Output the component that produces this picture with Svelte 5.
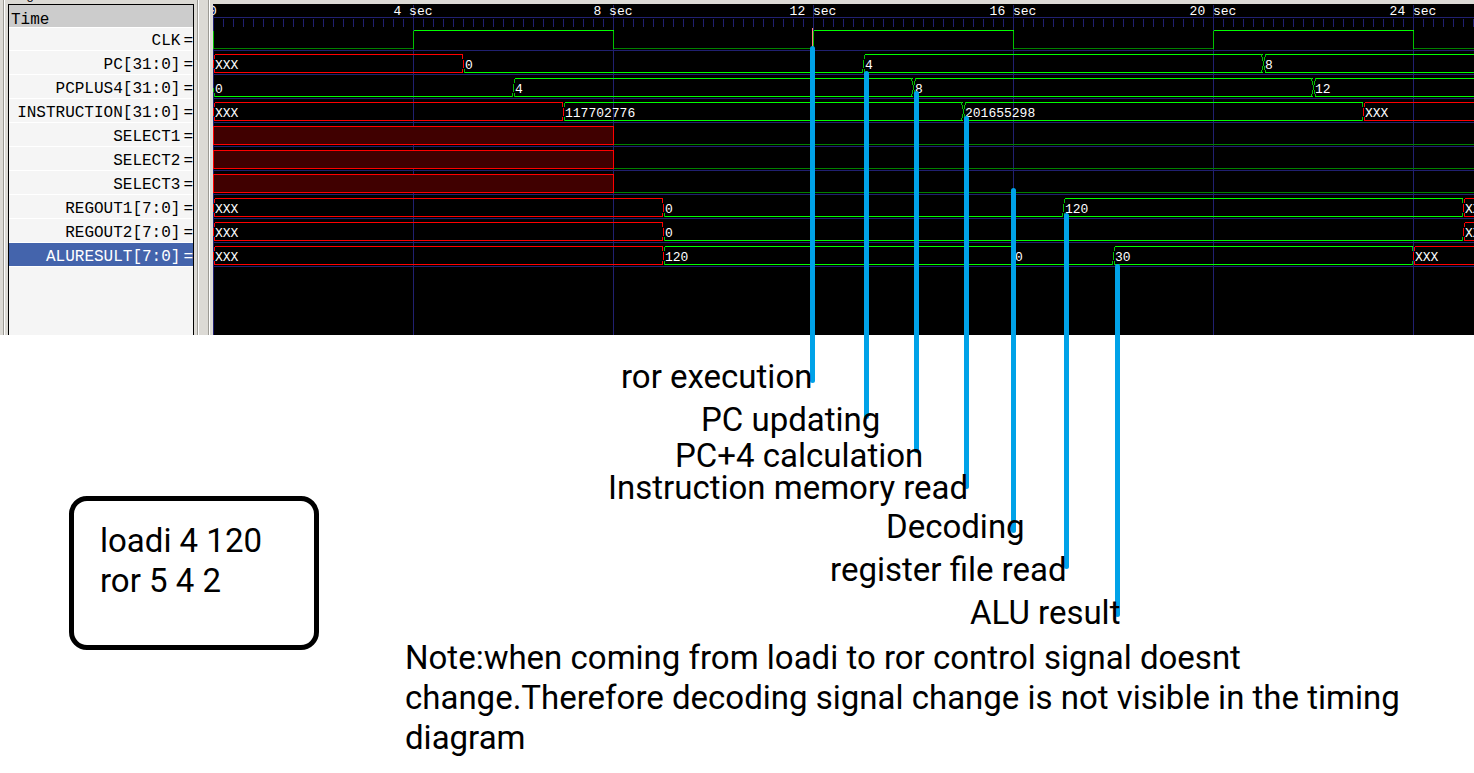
<script>
  const SECOND = 50;
  const ROW = 24;
  const FIRST_ROW = 26;
  const HIGH = 18;
  const END = 60;

  const bus = (name, values) => ({ name, kind: 'bus', values });
  const select = (name) => ({ name, kind: 'bit', values: [[0, 'x'], [8, 0]] });

  const signals = [
    { name: 'CLK', kind: 'bit', values: [[0, 0], [4, 1], [8, 0], [12, 1], [16, 0], [20, 1], [24, 0], [28, 1]] },
    bus('PC[31:0]', [[0, 'XXX'], [5, '0'], [13, '4'], [21, '8']]),
    bus('PCPLUS4[31:0]', [[0, '0'], [6, '4'], [14, '8'], [22, '12']]),
    bus('INSTRUCTION[31:0]', [[0, 'XXX'], [7, '117702776'], [15, '201655298'], [23, 'XXX']]),
    select('SELECT1'),
    select('SELECT2'),
    select('SELECT3'),
    bus('REGOUT1[7:0]', [[0, 'XXX'], [9, '0'], [17, '120'], [25, 'XXX']]),
    bus('REGOUT2[7:0]', [[0, 'XXX'], [9, '0'], [25, 'XXX']]),
    bus('ALURESULT[7:0]', [[0, 'XXX'], [9, '120'], [16, '0'], [18, '30'], [24, 'XXX']])
  ];
  const selected = 'ALURESULT[7:0]';

  const segments = (signal) =>
    signal.values.map(([time, value], i) => ({
      x: time * SECOND,
      end: (signal.values[i + 1]?.[0] ?? END) * SECOND,
      value,
      prev: i ? signal.values[i - 1][1] : null
    }));

  // Zero buses show only their lower rail, so their edges are half height.
  function edge(x, side, value, wide) {
    if (wide) return `M${x + side * 2} 0L${x} 9L${x + side * 2} 18`;
    const o = x + side;
    const lower = `M${x} 9V13M${o} 14V18`;
    return value === '0' ? lower : `M${o} 0V4M${x} 5V13M${o} 14V18`;
  }
  const crosses = (a, b) => [a, b].every((v) => v && v !== '0' && v !== 'XXX');
  const rail = (v) => (v === 'XXX' ? '#ff0000' : '#00ff00');
  const edgeColor = (v) => (v === 'XXX' ? '#ff0000' : '#00c000');

  const majors = [0, 4, 8, 12, 16, 20, 24, 28, 32, 36, 40];
  const ticks = Array.from({ length: 300 }, (_, i) => i * 10);

  const callouts = [
    { text: 'ror execution', x: 812, from: 48, to: 380, left: 621, top: 357 },
    { text: 'PC updating', x: 866, from: 73, to: 416, left: 701, top: 400 },
    { text: 'PC+4 calculation', x: 916, from: 93, to: 450, left: 675, top: 436 },
    { text: 'Instruction memory read', x: 966, from: 118, to: 486, left: 608, top: 468 },
    { text: 'Decoding', x: 1013, from: 190, to: 530, left: 886, top: 507 },
    { text: 'register file read', x: 1066, from: 215, to: 566, left: 830, top: 550 },
    { text: 'ALU result', x: 1117, from: 266, to: 614, left: 970, top: 593 }
  ];
</script>

<main>
  <section class="viewer">
    <div class="names">
      <div class="caption">Signals</div>
      <div class="list">
        <div class="time">Time</div>
        <ul>
          {#each signals as s}
            <li class:selected={s.name === selected}><span>{s.name}</span><span>=</span></li>
          {/each}
        </ul>
      </div>
    </div>
    <div class="divider"></div>
    <svg class="wave" aria-label="Waveforms">
      <g transform="translate(0.5 0.5)" fill="none" shape-rendering="crispEdges">
        <g stroke="#202070">
          {#each majors as t}
            <path d="M{t * SECOND} 0V340" />
          {/each}
          <path d="M0 13H3000" />
          {#each ticks as x}
            <path d="M{x} 14V22" />
          {/each}
          {#each signals as _, i}
            <path d="M0 {FIRST_ROW + i * ROW + 20}H3000" />
          {/each}
        </g>
        {#each signals as s, i}
          <g transform="translate(0 {FIRST_ROW + i * ROW})">
            {#each segments(s) as g}
              {#if s.kind === 'bit'}
                {#if g.value === 'x'}
                  <rect x={g.x} y="0" width={g.end - g.x} height={HIGH} fill="#400000" stroke="#ff0000" />
                {:else}
                  <path d="M{g.x} {g.value ? 0 : HIGH}H{g.end}" stroke={g.value ? '#00ff00' : '#008000'} />
                  {#if g.prev !== 'x'}
                    <path d="M{g.x} 0V{HIGH}" stroke="#00c000" />
                  {/if}
                {/if}
              {:else}
                {@const wide = crosses(g.prev, g.value)}
                {#if g.value !== '0'}
                  <path d="M{g.x + 1} 0H{g.end - 1}" stroke={rail(g.value)} />
                {/if}
                <path d="M{g.x + 1} {HIGH}H{g.end - 1}" stroke={rail(g.value)} />
                {#if g.prev}
                  <path d={edge(g.x, -1, g.prev, wide)} stroke={edgeColor(g.prev)} />
                {/if}
                <path d={edge(g.x, 1, g.value, wide)} stroke={edgeColor(g.value)} />
                {#if g.prev === 'XXX'}
                  <path d="M{g.x} 5V13" stroke="#ff0000" />
                {/if}
              {/if}
            {/each}
          </g>
        {/each}
        <path d="M599 23V60" stroke="#ff8080" />
      </g>
      {#each majors as t}
        <text x={t * SECOND} y="11" text-anchor="middle">{t ? `${t} sec` : '0'}</text>
      {/each}
      {#each signals as s, i}
        {#if s.kind === 'bus'}
          {#each segments(s) as g}
            <text x={g.x + 2} y={FIRST_ROW + i * ROW + 15}>{g.value}</text>
          {/each}
        {/if}
      {/each}
    </svg>
  </section>

  <section class="notes">
    <div class="program">loadi 4 120<br />ror 5 4 2</div>
    <p>
      Note:when coming from loadi to ror control signal doesnt change.Therefore decoding signal
      change is not visible in the timing diagram
    </p>
  </section>

  <svg class="pointers" aria-hidden="true">
    {#each callouts as c}
      <path d="M{c.x} {c.from}V{c.to}" transform="translate(0.5 0.5)" />
    {/each}
  </svg>
  {#each callouts as c}
    <span class="callout" style="left: {c.left}px; top: {c.top}px">{c.text}</span>
  {/each}
</main>

<style>
  :global(body) {
    margin: 0;
    background: #fff;
  }
  main {
    position: relative;
    overflow: hidden;
    color: #000;
    font: 33px/40px Roboto, sans-serif;
  }
  .viewer {
    display: flex;
    height: 335px;
    overflow: hidden;
    background: #dcdad5;
    font: 16px/22px 'Liberation Mono', monospace;
  }
  .names {
    box-sizing: border-box;
    flex: none;
    display: flex;
    flex-direction: column;
    margin-left: 3px;
    padding: 0 3px;
    border-left: 1px solid #9c9a94;
    border-right: 1px solid #9c9a94;
    box-shadow: inset 1px 0 #fff, 1px 0 #fff;
    width: 195px;
  }
  .caption {
    display: flex;
    align-items: flex-end;
    height: 4px;
    padding-left: 8px;
    overflow: hidden;
    font: 13px/18px 'Liberation Sans', sans-serif;
  }
  .list {
    flex: 1;
    margin-left: 1px;
    border: solid #000;
    border-width: 1px 1px 0;
    background: #f5f5f5;
  }
  .time {
    height: 22px;
    padding-left: 2px;
    background: #ccc;
    line-height: 30px;
  }
  ul {
    margin: 0;
    padding: 0;
    list-style: none;
  }
  li {
    box-sizing: border-box;
    display: flex;
    justify-content: flex-end;
    gap: 3px;
    height: 24px;
    border-bottom: 1px solid #fff;
    line-height: 28px;
  }
  li:first-child {
    border-top: 1px solid #fff;
    line-height: 26px;
  }
  li.selected {
    background: #4464ac;
    color: #fff;
  }
  .divider {
    flex: none;
    box-sizing: border-box;
    width: 5px;
    margin: 0 0 0 10px;
    border-left: 1px solid #9c9a94;
    box-shadow: inset 1px 0 #fff;
  }
  .wave {
    flex: 1;
    min-width: 0;
    height: 331px;
    margin-top: 4px;
    background: #000;
    font-size: 13px;
  }
  .wave text {
    fill: #fff;
  }
  .notes {
    display: grid;
    grid-template-columns: 250px 1fr;
    column-gap: 86px;
    align-items: start;
    padding: 161px 20px 15px 69px;
  }
  .program {
    box-sizing: border-box;
    height: 154px;
    padding: 20px 26px;
    border: 5px solid #000;
    border-radius: 18px;
  }
  p {
    margin: 142px 0 0;
  }
  .pointers {
    position: absolute;
    inset: 0;
    width: 100%;
    height: 100%;
    pointer-events: none;
  }
  .pointers path {
    stroke: #00a2e8;
    stroke-width: 5px;
    stroke-linecap: round;
  }
  .callout {
    position: absolute;
    white-space: nowrap;
  }
</style>
